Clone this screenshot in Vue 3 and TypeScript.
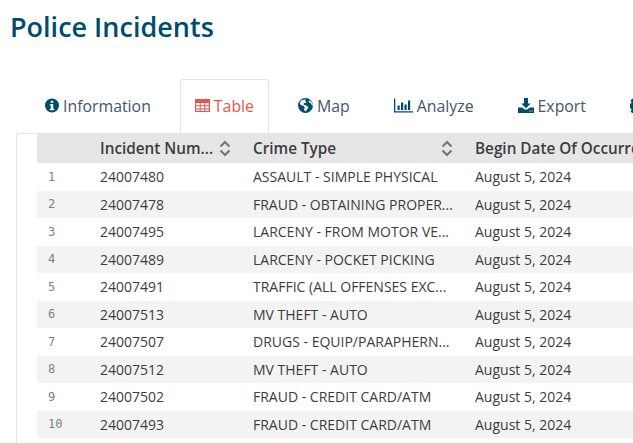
<template>
  <div class="page">
    <h1 class="title">Police Incidents</h1>
    <nav class="tabs">
      <a v-for="tab in tabs" :key="tab.name" class="tab" :class="{ active: tab.name === 'Table' }">
        <svg class="ico" :viewBox="tab.box" :style="{ width: tab.w + 'px' }" v-html="tab.icon"></svg>
        <span v-if="tab.label">{{ tab.label }}</span>
      </a>
    </nav>
    <div class="panel">
      <div class="grid">
        <div class="row head">
          <div class="num"></div>
          <div class="cell c1">
            <span class="txt">Incident Num...</span>
            <svg class="sort" viewBox="0 0 12 17"><path d="M1.500 6.500 6 2l4.500 4.500M1.500 10.500 6 15l4.500-4.500" /></svg>
          </div>
          <div class="cell c2">
            <span class="txt">Crime Type</span>
            <svg class="sort" viewBox="0 0 12 17"><path d="M1.500 6.500 6 2l4.500 4.500M1.500 10.500 6 15l4.500-4.500" /></svg>
          </div>
          <div class="cell c3"><span class="txt">Begin Date Of Occurrence</span></div>
        </div>
        <div v-for="(r, i) in rows" :key="r.id" class="row">
          <div class="num">{{ i + 1 }}</div>
          <div class="cell c1">{{ r.id }}</div>
          <div class="cell c2">{{ r.type }}</div>
          <div class="cell c3">August 5, 2024</div>
        </div>
      </div>
    </div>
  </div>
</template>

<script setup lang="ts">
const tabs = [
  {
    name: "Information",
    label: "Information",
    w: 14,
    box: "0 0 14 14",
    icon: '<path fill-rule="evenodd" d="M7 0a7 7 0 1 1 0 14A7 7 0 0 1 7 0ZM5.800 2.200h2.400v2.100H5.800ZM4.900 5.400h3.300v4.900h1v1.500H4.800v-1.500h1V6.900h-.9Z"/>',
  },
  {
    name: "Table",
    label: "Table",
    w: 15,
    box: "0 0 15 14",
    icon: '<path fill-rule="evenodd" d="M0 .5h15v13H0ZM1.200 4.500v2.300h3.500V4.500Zm4.500 0v2.300h3.600V4.500Zm4.600 0v2.300h3.500V4.500ZM1.200 7.800v2.100h3.500V7.800Zm4.500 0v2.100h3.600V7.800Zm4.600 0v2.100h3.500V7.800ZM1.200 10.900v1.500h3.500v-1.500Zm4.500 0v1.500h3.600v-1.500Zm4.600 0v1.500h3.500v-1.500Z"/>',
  },
  {
    name: "Map",
    label: "Map",
    w: 15,
    box: "0 0 15 15",
    icon: '<path fill-rule="evenodd" d="M7.500 0a7.500 7.500 0 1 1 0 15 7.500 7.500 0 0 1 0-15ZM2.800 2.800 1.800 6l2.200 1.600 1.900.4.800 1.500-.6 2.400 1.400 1.500 1.700-2.200 1.300-1.700-1.700-1.800-2.200-.8L5.300 5.900l1-1.100 1.300.4.800-1.300-1.500-1 .9-1.400c-2 0-3.800.6-5 1.300ZM11.500 2.500l-1 .7.900 1.400 1.600.7 1 2.500.8-.6c-.2-1.900-1.300-3.600-3.300-4.700Z"/>',
  },
  {
    name: "Analyze",
    label: "Analyze",
    w: 19,
    box: "0 0 19 15",
    icon: '<path d="M0 .5h1.300v12.700H19v1.300H0Z"/><path d="M3.500 7.500h2.200v4.500H3.500ZM7 4.500h2.200V12H7ZM10.500 6.500h2.200V12h-2.200ZM14 2.500h2.200V12H14Z"/>',
  },
  {
    name: "Export",
    label: "Export",
    w: 16,
    box: "0 0 16 15",
    icon: '<path d="M6 0h4v5.500h2.800L8 10.200 3.200 5.500H6Z"/><path fill-rule="evenodd" d="M0 9.500h4.400l2.100 2.100h3l2.100-2.100H16V15H0Zm11.500 2.900v1h1v-1Zm2 0v1h1v-1Z"/>',
  },
  {
    name: "Settings",
    label: "",
    w: 15,
    box: "0 0 15 15",
    icon: '<path fill-rule="evenodd" d="M6 0h3l.4 2 1.300.6 1.700-1.100 2.100 2.100-1.100 1.700.6 1.300 2 .4v3l-2 .4-.6 1.300 1.100 1.700-2.100 2.100-1.700-1.100-1.300.6-.4 2H6l-.4-2-1.300-.6-1.700 1.100-2.100-2.100 1.100-1.700-.6-1.300-2-.4V6l2-.4.6-1.300-1.100-1.700 2.100-2.100 1.700 1.100 1.300-.6ZM7.500 5a2.500 2.500 0 1 0 0 5 2.500 2.500 0 0 0 0-5Z"/>',
  },
];

const rows = [
  { id: "24007480", type: "ASSAULT - SIMPLE PHYSICAL" },
  { id: "24007478", type: "FRAUD - OBTAINING PROPER..." },
  { id: "24007495", type: "LARCENY - FROM MOTOR VE..." },
  { id: "24007489", type: "LARCENY - POCKET PICKING" },
  { id: "24007491", type: "TRAFFIC (ALL OFFENSES EXC..." },
  { id: "24007513", type: "MV THEFT - AUTO" },
  { id: "24007507", type: "DRUGS - EQUIP/PARAPHERN..." },
  { id: "24007512", type: "MV THEFT - AUTO" },
  { id: "24007502", type: "FRAUD - CREDIT CARD/ATM" },
  { id: "24007493", type: "FRAUD - CREDIT CARD/ATM" },
];
</script>

<style scoped>
.page {
  width: 633px;
  height: 443px;
  overflow: hidden;
  font-family: "Open Sans", sans-serif;
  background: #fff;
}
.title {
  margin: 0;
  padding: 8px 0 0 10px;
  height: 79px;
  box-sizing: border-box;
  font-size: 27px;
  line-height: 38px;
  font-weight: 550;
  color: #004c6d;
}
.tabs {
  display: flex;
  gap: 14px;
  margin-left: 30px;
  height: 54px;
  white-space: nowrap;
}
.tab {
  display: flex;
  align-items: center;
  flex: none;
  gap: 4px;
  padding: 0 14px 2px;
  color: #44566a;
  font-size: 15.85px;
  border: 1px solid transparent;
  border-bottom: 0;
  box-sizing: border-box;
}
.tab .ico {
  height: 15px;
  fill: #004c6d;
  flex: none;
}
.tab.active {
  color: #e0584f;
  background: #fff;
  border-color: #e4e4e4;
  border-radius: 3px 3px 0 0;
}
.tab.active .ico {
  fill: #e0584f;
}
.panel {
  margin-left: 16px;
  width: 700px;
  padding-left: 20px;
  border-left: 1px solid #e4e4e4;
  border-top: 1px solid #e4e4e4;
  border-top-left-radius: 3px;
  height: 320px;
  box-sizing: border-box;
}
.grid {
  margin-top: -1px;
  font-size: 14px;
  color: #3d3d3d;
}
.row {
  display: flex;
  align-items: center;
  height: 27.5px;
}
.row:nth-child(odd) {
  background: #f3f3f3;
}
.row.head {
  height: 30px;
  background: #e6e6e6;
  font-size: 15.3px;
  font-weight: 600;
}
.num {
  width: 63px;
  flex: none;
  padding-left: 11px;
  box-sizing: border-box;
  font-family: "DejaVu Sans Mono", monospace;
  font-size: 12px;
  color: #808080;
}
.cell {
  flex: none;
  display: flex;
  align-items: center;
  white-space: nowrap;
  box-sizing: border-box;
}
.c1 {
  width: 153px;
}
.c2 {
  width: 222px;
}
.c3 {
  width: 300px;
}
.txt {
  flex: 1;
}
.sort {
  width: 12px;
  height: 17px;
  fill: none;
  stroke: #777;
  stroke-width: 2.2;
  margin-right: 22px;
  flex: none;
}
</style>
